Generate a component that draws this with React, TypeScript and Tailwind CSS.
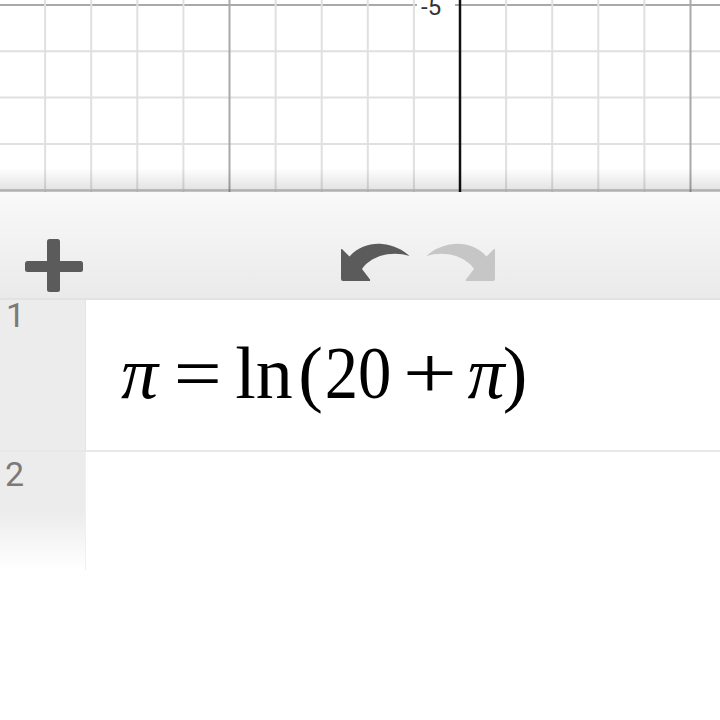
import React from "react";

const STEP_X = 46.1;
const STEP_Y = 46.3;

function Grid() {
  const xs: { x: number; kind: string }[] = [];
  for (let k = -10; k <= 5; k++) {
    const x = 460 + k * STEP_X;
    xs.push({ x, kind: k === 0 ? "axis" : k % 5 === 0 ? "major" : "minor" });
  }
  const ys: { y: number; kind: string }[] = [];
  for (let j = 0; j <= 4; j++) {
    ys.push({ y: 5 + j * STEP_Y, kind: j === 0 ? "major" : "minor" });
  }
  const color = (kind: string) =>
    kind === "axis" ? "#111" : kind === "major" ? "#a9a9a9" : "#e0e0e0";

  return (
    <svg width={720} height={192} className="absolute inset-0">
      {ys.map((l) => (
        <line key={`h${l.y}`} x1={0} x2={720} y1={l.y} y2={l.y} stroke={color(l.kind)} strokeWidth={2} />
      ))}
      {xs
        .filter((l) => l.kind !== "axis")
        .map((l) => (
          <line key={`v${l.x}`} x1={l.x} x2={l.x} y1={0} y2={192} stroke={color(l.kind)} strokeWidth={2} />
        ))}
      <rect x={417} y={0} width={38} height={14} fill="#fff" />
      <line x1={460} x2={460} y1={0} y2={192} stroke="#111" strokeWidth={2.5} />
    </svg>
  );
}

function PlusIcon() {
  return (
    <svg width={58} height={53} viewBox="0 0 58 53">
      <rect x={0} y={22} width={58} height={11} rx={2.5} fill="#5b5b5b" />
      <rect x={22} y={0} width={13} height={53} rx={2.5} fill="#5b5b5b" />
    </svg>
  );
}

// curved arrow, head at bottom-left, tapered tail at top-right
function UndoIcon({ flip, color }: { flip?: boolean; color: string }) {
  return (
    <svg width={71} height={40} viewBox="0 0 71 40" className={flip ? "-scale-x-100" : ""}>
      <path
        d="M2,7 L9.5,14.5 C18,5 30,1 42,2 C54,3 63,8 69.5,14 C60,11 50,11 40,14 C32,17 26,21 22,27 L30,37.5 Q30.5,39 29,39 L3,39 Q1,39 1,37 L1,8 Q1,6.5 2,7 Z"
        fill={color}
      />
    </svg>
  );
}

// one token of the typeset expression, centred in a fixed box
function Tok({ w, ml, italic, children }: { w: string; ml: string; italic?: boolean; children: React.ReactNode }) {
  return (
    <span className={`flex justify-center shrink-0 ${w} ${ml} ${italic ? "italic" : ""}`}>{children}</span>
  );
}

export default function App() {
  return (
    <div className="w-[720px] h-[720px] bg-white overflow-hidden flex flex-col">
      {/* graph area */}
      <div className="relative h-[192px] shrink-0 bg-white">
        <Grid />
        <div className="absolute left-[421px] top-[-5px] text-[24px] leading-none text-[#333] font-['Roboto',sans-serif]">
          -5
        </div>
        <div className="absolute left-0 right-0 bottom-0 h-[24px] bg-gradient-to-b from-transparent to-[rgba(0,0,0,0.12)]" />
        <div className="absolute left-0 right-0 bottom-0 h-[3px] bg-[rgba(0,0,0,0.1)]" />
      </div>

      {/* toolbar */}
      <div className="h-[108px] shrink-0 bg-gradient-to-b from-[#f9f9f9] to-[#eaeaea] border-b-2 border-[#e2e2e2] flex items-end">
        <div className="ml-[25px] mb-[6px]">
          <PlusIcon />
        </div>
        <div className="ml-[257px] mb-[16px] flex gap-[14px]">
          <UndoIcon color="#5b5b5b" />
          <UndoIcon flip color="#c6c6c6" />
        </div>
      </div>

      {/* expression 1 */}
      <div className="h-[152px] shrink-0 flex border-b-2 border-[#e8e8e8]">
        <div className="w-[86px] shrink-0 bg-[#ececec] border-r border-[#e4e4e4] pl-[6px] pt-[3px] text-[34px] leading-[24px] text-[#7a7a7a] font-['Roboto',sans-serif]">
          1
        </div>
        <div className="flex-1 flex items-center pl-[39px] pb-[4px] text-[74px] leading-none text-black font-['Liberation_Serif',serif]">
          <Tok w="w-[29px]" ml="ml-0" italic>π</Tok>
          <Tok w="w-[41px]" ml="ml-[23px]"><span className="scale-x-[1.15]">=</span></Tok>
          <Tok w="w-[64px]" ml="ml-[14px]">ln</Tok>
          <Tok w="w-[15px]" ml="ml-[7px]">(</Tok>
          <Tok w="w-[64px]" ml="ml-[8px]"><span className="scale-x-[0.9]">20</span></Tok>
          <Tok w="w-[43px]" ml="ml-[18px]"><span className="scale-x-[1.3]">+</span></Tok>
          <Tok w="w-[38px]" ml="ml-[16px]" italic>π</Tok>
          <Tok w="w-[14px]" ml="ml-[3px]">)</Tok>
        </div>
      </div>

      {/* expression 2 */}
      <div className="h-[118px] shrink-0 flex">
        <div className="w-[86px] shrink-0 bg-gradient-to-b from-[#ececec] via-[#ececec] to-white border-r border-[#f0f0f0] pl-[5px] pt-[5px] text-[34px] leading-none text-[#7a7a7a] font-['Roboto',sans-serif]">
          2
        </div>
        <div className="flex-1" />
      </div>

      <div className="flex-1 bg-white" />
    </div>
  );
}
